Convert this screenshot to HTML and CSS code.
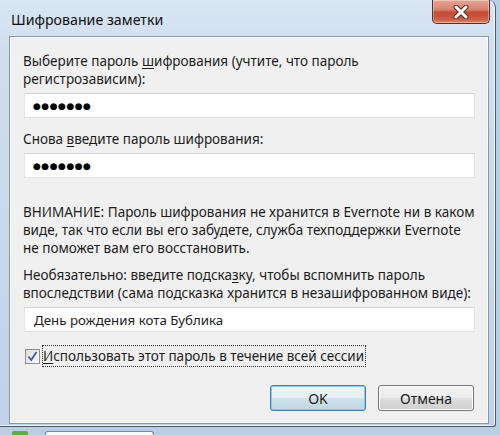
FILE: index.html
```html
<!DOCTYPE html>
<html lang="ru">
<head>
  <meta charset="UTF-8" />
  <title>Шифрование заметки</title>
  <link rel="stylesheet" href="styles.css">
</head>
<body>
  <div class="window">
    <div class="titlebar">
      <div class="title">Шифрование заметки</div>
      <div class="close">
        <svg width="20" height="14" viewBox="0 0 20 14">
          <path d="M5 2 L15 12 M15 2 L5 12" stroke="#5a2a22" stroke-width="5" stroke-linecap="round"/>
          <path d="M5 2 L15 12 M15 2 L5 12" stroke="#fff" stroke-width="3" stroke-linecap="round"/>
        </svg>
      </div>
    </div>

    <div class="client">
      <div class="label">Выберите пароль <u>ш</u>ифрования (учтите, что пароль<br>регистрозависим):</div>
      <div class="field"><span class="dots">●●●●●●●</span></div>

      <div class="label second">Снова <u>в</u>ведите пароль шифрования:</div>
      <div class="field"><span class="dots">●●●●●●●</span></div>

      <div class="warning">ВНИМАНИЕ: Пароль шифрования не хранится в Evernote ни в каком виде, так что если вы его забудете, служба техподдержки Evernote не поможет вам его восстановить.</div>

      <div class="label hint">Необязательно: введите подска<u>з</u>ку, чтобы вспомнить пароль<br>впоследствии (сама подсказка хранится в незашифрованном виде):</div>
      <div class="field text">День рождения кота Бублика</div>

      <div class="check-row">
        <span class="checkbox">
          <svg width="11" height="11" viewBox="0 0 11 11">
            <path d="M1.5 5.5 L4.2 9 L9.5 1" fill="none" stroke="#3d56b0" stroke-width="1.8"/>
          </svg>
        </span>
        <span class="check-label"><u>И</u>спользовать этот пароль в течение всей сессии</span>
      </div>

      <div class="buttons">
        <button class="btn default">OK</button>
        <button class="btn">Отмена</button>
      </div>
    </div>
  </div>

  <div class="taskbar">
    <span class="task-icon"></span>
    <span class="task-box"></span>
  </div>
</body>
</html>
```

FILE: styles.css
```css
body {
  margin: 0;
  width: 500px;
  height: 435px;
  overflow: hidden;
  background: #b9cde3;
  font-family: 'Noto Sans', 'Open Sans', sans-serif;
  color: #1c1c1c;
}
.window {
  width: 496px;
  height: 427px;
  box-sizing: border-box;
  padding: 0 6px 2px 9px;
  background: linear-gradient(180deg, #d9e6f3 0%, #cfdeef 12%, #c6d8ec 60%, #bed2e9 100%);
  border-right: 1px solid #4f5a68;
  border-bottom: 1px solid #4f5a68;
  border-top-right-radius: 8px;
  border-bottom-right-radius: 3px;
  box-shadow: inset -1px 0 0 #eef5fc, inset 0 -1px 0 #eef5fc;
}
.titlebar {
  height: 36px;
  display: flex;
  justify-content: space-between;
  align-items: flex-start;
}
.title {
  margin: 10px 0 0 2px;
  font-size: 14.2px;
  color: #111;
}
.close {
  width: 56px;
  height: 23px;
  margin-right: -1px;
  display: flex;
  align-items: center;
  justify-content: center;
  border: 1px solid #5e2c25;
  border-top: none;
  border-radius: 0 0 5px 5px;
  background: linear-gradient(180deg, #e6a696 0%, #d98470 40%, #c44a33 55%, #cc6046 85%, #dc8a70 100%);
  box-shadow: inset 0 0 0 1px rgba(255,255,255,0.35);
}
.client {
  height: 388px;
  box-sizing: border-box;
  padding: 15px 13px 0 13px;
  background: #f0f0f0;
  border: 1px solid #8796a8;
  box-shadow: inset 0 0 0 1px #fbfbfb;
  font-size: 13.5px;
  line-height: 18px;
}
.label {
  margin-bottom: 5px;
}
.label u, .check-label u {
  text-decoration-thickness: 1px;
  text-underline-offset: 2px;
}
.second {
  margin-top: 12px;
}
.field {
  height: 25px;
  box-sizing: border-box;
  margin-left: 1px;
  background: #fff;
  border: 1px solid #e3e3e3;
  border-top-color: #d2d2d2;
  display: flex;
  align-items: center;
  padding-left: 8px;
}
.dots {
  font-size: 9px;
  letter-spacing: 0.5px;
  color: #000;
  font-family: 'DejaVu Sans', sans-serif;
}
.warning {
  margin-top: 25px;
}
.hint {
  margin-top: 9px;
}
.text {
  font-size: 13.3px;
  padding-left: 9px;
}
.check-row {
  margin-top: 13px;
  display: flex;
  align-items: center;
  gap: 2px;
}
.checkbox {
  width: 13px;
  height: 13px;
  margin-left: 2px;
  border: 1px solid #8e8f8f;
  background: linear-gradient(135deg, #dcdcdc, #fafafa);
  display: flex;
  align-items: center;
  justify-content: center;
}
.check-label {
  font-size: 13.5px;
  padding: 1px 1px 1px 0;
  border: 1px dotted #333;
}
.buttons {
  margin-top: 18px;
  display: flex;
  justify-content: flex-end;
  gap: 12px;
  padding-right: 1px;
}
.btn {
  width: 96px;
  height: 26px;
  font-family: inherit;
  font-size: 14px;
  color: #1c1c1c;
  border: 1px solid #767676;
  border-radius: 3px;
  background: linear-gradient(180deg, #f4f4f4 0%, #ececec 48%, #dcdcdc 52%, #d0d0d0 100%);
  box-shadow: inset 0 0 0 1px #fbfbfb;
}
.default {
  border-color: #3c7fb1;
  box-shadow: inset 0 0 0 1px #7fd0f3;
  background: linear-gradient(180deg, #eef6fa 0%, #e3eff5 48%, #cfe2ec 52%, #c0d6e2 100%);
}
.taskbar {
  display: flex;
  align-items: flex-start;
  gap: 17px;
  padding: 4px 0 0 12px;
}
.task-icon {
  width: 16px;
  height: 6px;
  background: #5cb238;
  border-radius: 2px 2px 0 0;
}
.task-box {
  width: 107px;
  height: 6px;
  background: #fafafa;
  border: 1px solid #7a8796;
  border-bottom: none;
  border-radius: 3px 3px 0 0;
}
```
